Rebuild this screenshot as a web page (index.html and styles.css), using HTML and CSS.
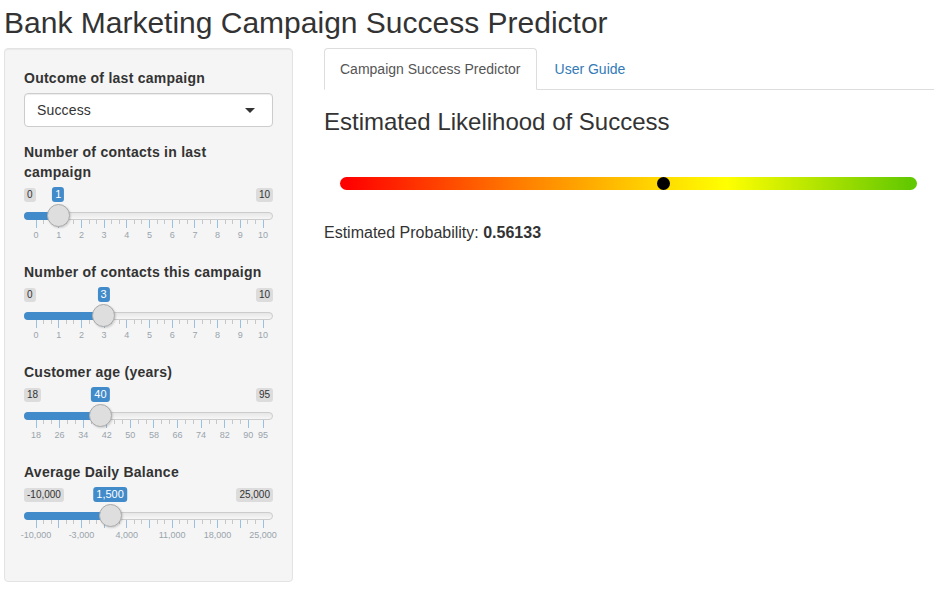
FILE: index.html
```html
<!DOCTYPE html>
<html lang="en">
<head>
<meta charset="utf-8">
<title>Bank Marketing Campaign Success Predictor</title>
<link rel="stylesheet" href="styles.css">
</head>
<body>
<div class="page">
  <h2 class="title">Bank Marketing Campaign Success Predictor</h2>
  <div class="layout">
    <aside class="well">
      <div class="form-group">
        <label class="control-label">Outcome of last campaign</label>
        <div class="select-input"><span class="select-value">Success</span><span class="caret"></span></div>
      </div>
      <div class="form-group">
        <label class="control-label">Number of contacts in last campaign</label>
        <div class="irs" data-min="0" data-max="10" data-value="1" data-grid="1" data-skip="1"></div>
      </div>
      <div class="form-group">
        <label class="control-label">Number of contacts this campaign</label>
        <div class="irs" data-min="0" data-max="10" data-value="3" data-grid="1" data-skip="1"></div>
      </div>
      <div class="form-group">
        <label class="control-label">Customer age (years)</label>
        <div class="irs" data-min="18" data-max="95" data-value="40" data-grid="8" data-skip="1"></div>
      </div>
      <div class="form-group">
        <label class="control-label">Average Daily Balance</label>
        <div class="irs" data-min="-10000" data-max="25000" data-value="1500" data-grid="3500" data-skip="2"></div>
      </div>
    </aside>
    <main class="main">
      <ul class="nav-tabs">
        <li class="active"><a>Campaign Success Predictor</a></li>
        <li><a>User Guide</a></li>
      </ul>
      <div class="tab-content">
        <h3 class="section-title">Estimated Likelihood of Success</h3>
        <div class="gauge">
          <div class="gauge-bar"><span class="gauge-dot" style="--p:0.56133"></span></div>
        </div>
        <p class="prob">Estimated Probability: <strong>0.56133</strong></p>
      </div>
    </main>
  </div>
</div>
<script src="app.js"></script>
</body>
</html>
```
FILE: styles.css
```css
* { box-sizing: border-box; }
html, body { margin: 0; }
body {
  font-family: "Liberation Sans", Arial, Helvetica, sans-serif;
  font-size: 14px;
  line-height: 1.42857;
  color: #333;
  background: #fff;
}
.page { padding: 6px 6px 0 4px; }
.title {
  margin: 0 0 9px;
  font-size: 30px;
  font-weight: normal;
  line-height: 33px;
}
.layout { display: flex; align-items: flex-start; gap: 31px; }
.well {
  width: 289px;
  flex: none;
  padding: 19px;
  background: #f5f5f5;
  border: 1px solid #e3e3e3;
  border-radius: 4px;
  box-shadow: inset 0 1px 1px rgba(0,0,0,.05);
}
.form-group { margin-bottom: 15px; }
.control-label {
  display: block;
  font-weight: bold;
  line-height: 20px;
  letter-spacing: .25px;
  margin-bottom: 5px;
}
.select-input {
  position: relative;
  height: 34px;
  padding: 6px 12px;
  line-height: 20px;
  background: #fff;
  border: 1px solid #ccc;
  border-radius: 4px;
  box-shadow: inset 0 1px 1px rgba(0,0,0,.075);
}
.select-value { letter-spacing: .15px; }
.caret {
  position: absolute;
  right: 17px;
  top: 14px;
  width: 0;
  height: 0;
  border-style: solid;
  border-width: 5px 5px 0 5px;
  border-color: #333 transparent transparent transparent;
}

/* range slider */
.irs { position: relative; height: 60px; font-family: "Liberation Sans", Arial, sans-serif; }
.irs-line {
  position: absolute; left: 0; right: 0; top: 25px; height: 8px;
  border: 1px solid #ccc;
  border-radius: 16px;
  background: linear-gradient(to bottom, #dedede -50%, #fff 150%);
}
.irs-bar {
  position: absolute; left: 0; top: 25px; height: 8px;
  background: #428bca;
  border-radius: 16px 0 0 16px;
}
.irs-min, .irs-max {
  position: absolute; top: 1px;
  font-size: 10px; line-height: 12px;
  padding: 1px 3px;
  color: #333;
  background: rgba(0,0,0,.1);
  border-radius: 3px;
}
.irs-min { left: 0; }
.irs-max { right: 0; }
.irs-single {
  position: absolute; top: 0;
  transform: translateX(-50%);
  font-size: 11px; line-height: 13px;
  padding: 1px 3px;
  color: #fff;
  background: #428bca;
  border-radius: 3px;
  white-space: nowrap;
}
.irs-slider {
  position: absolute; top: 17px;
  width: 23px; height: 23px;
  margin-left: -11.5px;
  background: #dedede;
  border: 1px solid #aaa;
  border-radius: 50%;
  box-shadow: 1px 1px 2px rgba(0,0,0,.15);
}
.irs-grid { position: absolute; left: 0; right: 0; bottom: 0; height: 27px; }
.irs-grid-pol {
  position: absolute; top: 0; width: 1px; height: 8px;
  background: #428bca; opacity: .5;
}
.irs-grid-pol.small { height: 4px; background: #999; }
.irs-grid-text {
  position: absolute; top: 11px;
  transform: translateX(-50%);
  font-size: 9px; line-height: 9px;
  color: #99a4ac;
  white-space: nowrap;
}

/* main panel */
.main { width: 610px; flex: none; }
.nav-tabs {
  display: flex;
  list-style: none;
  margin: 0;
  padding: 0;
  border-bottom: 1px solid #ddd;
}
.nav-tabs li { margin: 0 2px -1px 0; }
.nav-tabs a {
  display: block;
  padding: 10px 15px;
  line-height: 20px;
  border: 1px solid transparent;
  border-radius: 4px 4px 0 0;
  color: #337ab7;
  cursor: pointer;
}
.nav-tabs .active a {
  color: #555;
  background: #fff;
  border-color: #ddd #ddd transparent;
}
.section-title {
  margin: 19px 0 0;
  font-size: 24px;
  font-weight: normal;
  line-height: 26.4px;
}
.gauge { margin-top: 42px; padding: 0 17px 0 16px; }
.gauge-bar {
  position: relative;
  height: 13px;
  border-radius: 6.5px;
  background: linear-gradient(to right, #f00 1%, #ff8000 32%, #ffd800 55%, #ffff00 67%, #62c800 99%);
}
.gauge-dot {
  position: absolute;
  top: 0;
  left: calc(6.5px + (100% - 13px) * var(--p));
  width: 13px;
  height: 13px;
  margin-left: -6.5px;
  border-radius: 50%;
  background: #000;
}
.prob {
  margin: 32px 0 0;
  font-size: 16px;
  line-height: 22px;
}
```
FILE: app.js
```js
(function () {
  function fmt(n) {
    var s = String(Math.abs(n)).replace(/\B(?=(\d{3})+(?!\d))/g, ',');
    return (n < 0 ? '-' : '') + s;
  }
  var sliders = document.querySelectorAll('.irs');
  for (var k = 0; k < sliders.length; k++) {
    var el = sliders[k];
    var min = +el.getAttribute('data-min');
    var max = +el.getAttribute('data-max');
    var val = +el.getAttribute('data-value');
    var step = +el.getAttribute('data-grid');
    var skip = +el.getAttribute('data-skip');
    var pos = function (v) { return 11.5 + 227 * (v - min) / (max - min); };
    var html = '<span class="irs-line"></span>';
    html += '<span class="irs-bar" style="width:' + pos(val).toFixed(1) + 'px"></span>';
    html += '<span class="irs-min">' + fmt(min) + '</span>';
    html += '<span class="irs-max">' + fmt(max) + '</span>';
    html += '<div class="irs-grid">';
    var prev = null, i = 0, v = min;
    while (true) {
      var last = v >= max;
      if (last) v = max;
      var x = pos(v);
      if (prev !== null && (v - prev) >= step) {
        for (var z = 1; z <= 2; z++) {
          var sx = pos(prev + (v - prev) * z / 3);
          html += '<span class="irs-grid-pol small" style="left:' + sx.toFixed(1) + 'px"></span>';
        }
      }
      html += '<span class="irs-grid-pol" style="left:' + x.toFixed(1) + 'px"></span>';
      if (i % skip === 0) {
        html += '<span class="irs-grid-text" style="left:' + (x + 0.5).toFixed(1) + 'px">' + fmt(v) + '</span>';
      }
      if (last) break;
      prev = v;
      v += step;
      i++;
    }
    html += '</div>';
    html += '<span class="irs-single" style="left:' + pos(val).toFixed(1) + 'px">' + fmt(val) + '</span>';
    html += '<span class="irs-slider" style="left:' + pos(val).toFixed(1) + 'px"></span>';
    el.innerHTML = html;
  }
})();
```
